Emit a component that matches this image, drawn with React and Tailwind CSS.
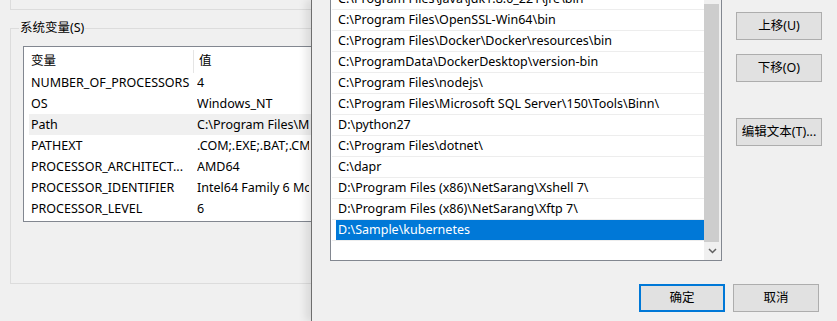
import React from "react";

const sysVars = [
  ["NUMBER_OF_PROCESSORS", "4"],
  ["OS", "Windows_NT"],
  ["Path", "C:\\Program Files\\Microsoft SQL Server\\150\\Tools\\Binn\\"],
  ["PATHEXT", ".COM;.EXE;.BAT;.CMD;.VBS;.VBE;.JS;.JSE;.WSF;.WSH;.MSC"],
  ["PROCESSOR_ARCHITECT...", "AMD64"],
  ["PROCESSOR_IDENTIFIER", "Intel64 Family 6 Model 158 Stepping 10, GenuineIntel"],
  ["PROCESSOR_LEVEL", "6"],
];

const paths = [
  "C:\\Program Files\\Java\\jdk1.8.0_221\\jre\\bin",
  "C:\\Program Files\\OpenSSL-Win64\\bin",
  "C:\\Program Files\\Docker\\Docker\\resources\\bin",
  "C:\\ProgramData\\DockerDesktop\\version-bin",
  "C:\\Program Files\\nodejs\\",
  "C:\\Program Files\\Microsoft SQL Server\\150\\Tools\\Binn\\",
  "D:\\python27",
  "C:\\Program Files\\dotnet\\",
  "C:\\dapr",
  "D:\\Program Files (x86)\\NetSarang\\Xshell 7\\",
  "D:\\Program Files (x86)\\NetSarang\\Xftp 7\\",
  "D:\\Sample\\kubernetes",
];

const Button = ({ children, primary }) => (
  <div
    className={
      "w-[86px] h-[28px] flex items-center justify-center bg-[#e1e1e1] " +
      (primary ? "border-2 border-[#0078d7]" : "border border-[#adadad]")
    }
  >
    {children}
  </div>
);

export default function App() {
  return (
    <div className="relative w-[837px] h-[321px] overflow-hidden bg-[#f0f0f0] text-[12.5px] text-black font-['Noto_Sans','Noto_Sans_CJK_SC',sans-serif]">
      {/* background window: environment variables */}
      <div className="pl-[10px]">
        <div className="w-[302px] h-[10px] border-l border-b border-[#dcdcdc]" />

        <div className="relative mt-[18px] w-[302px] h-[256px] border-l border-t border-b border-[#dcdcdc]">
          <span className="absolute left-[8px] top-[-9px] px-[1px] leading-[16px] bg-[#f0f0f0]">
            系统变量(S)
          </span>

          {/* list view, its right part lies under the dialog */}
          <div className="ml-[12px] mt-[17px] w-[289px] h-[176px] border border-r-0 border-[#828790] bg-white overflow-hidden">
            <div className="flex h-[25px] items-center pt-[3px]">
              <div className="w-[169px] shrink-0 pl-[7px]">变量</div>
              <div className="w-px h-[23px] shrink-0 bg-[#e5e5e5]" />
              <div className="pl-[5px]">值</div>
            </div>
            {sysVars.map(([name, value]) => (
              <div key={name} className="flex h-[21px] pl-[5px]">
                <div
                  className={
                    "flex flex-1 items-center pt-[1px] whitespace-nowrap overflow-hidden " +
                    (name === "Path" ? "bg-[#f0f0f0]" : "")
                  }
                >
                  <div className="w-[168px] shrink-0 pl-[2px]">{name}</div>
                  <div className="w-[112px] shrink-0 overflow-hidden">{value}</div>
                </div>
              </div>
            ))}
          </div>
        </div>
      </div>

      {/* edit environment variable dialog */}
      <div className="absolute left-[311px] top-0 w-[526px] h-[321px] bg-[#f0f0f0] border-l border-[#6e6e6e] shadow-[-5px_0_8px_rgba(0,0,0,0.10)] flex flex-col">
        <div className="flex">
          <div className="ml-[18px] -mt-[10px] w-[392px] h-[271px] border border-[#828790] bg-white flex overflow-hidden">
            <div className="flex-1 -mt-[2px]">
              {paths.map((p, i) => {
                const selected = i === paths.length - 1;
                return (
                  <div key={p} className="ml-[1px] h-[21px] flex border-b border-[#ededed]">
                    <div
                      className={
                        "ml-[4px] flex-1 flex items-center px-[2px] pt-[1px] whitespace-nowrap " +
                        (selected ? "bg-[#0078d7] text-white" : "")
                      }
                    >
                      {p}
                    </div>
                  </div>
                );
              })}
            </div>
            <div className="w-[17px] bg-[#f0f0f0] flex flex-col">
              <div className="mt-[13px] w-[15px] h-[238px] bg-[#cdcdcd]" />
              <div className="flex-1 flex items-center justify-center">
                <svg width="9" height="6" viewBox="0 0 9 6">
                  <polyline points="1,1 4.5,4.5 8,1" fill="none" stroke="#606060" strokeWidth="1.5" />
                </svg>
              </div>
            </div>
          </div>

          <div className="ml-[14px] flex flex-col">
            <div className="mt-[12px]">
              <Button>上移(U)</Button>
            </div>
            <div className="mt-[14px]">
              <Button>下移(O)</Button>
            </div>
            <div className="mt-[36px]">
              <Button>编辑文本(T)...</Button>
            </div>
          </div>
        </div>

        <div className="mt-[23px] flex justify-end gap-[8px] pr-[18px]">
          <Button primary>确定</Button>
          <Button>取消</Button>
        </div>
      </div>
    </div>
  );
}
